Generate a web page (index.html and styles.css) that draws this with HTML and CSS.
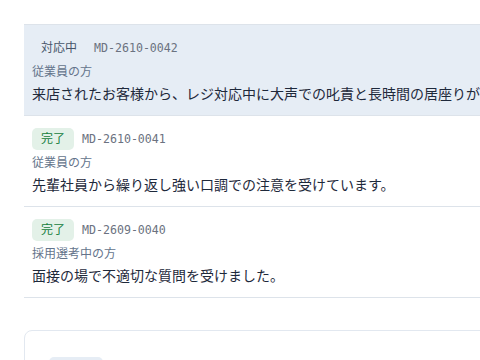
FILE: index.html
```html
<!DOCTYPE html>
<html lang="ja">
<head>
    <meta charset="UTF-8">
    <meta name="viewport" content="width=device-width, initial-scale=1.0">
    <title>相談一覧</title>
    <link rel="stylesheet" href="styles.css">
</head>
<body>
    <div class="page">
        <ul class="case-list">
            <li class="case-item active">
                <div class="case-head">
                    <span class="status status-open">対応中</span>
                    <span class="case-id">MD-2610-0042</span>
                </div>
                <div class="case-who">従業員の方</div>
                <div class="case-text">来店されたお客様から、レジ対応中に大声での叱責と長時間の居座りがありました。</div>
            </li>
            <li class="case-item">
                <div class="case-head">
                    <span class="status status-done">完了</span>
                    <span class="case-id">MD-2610-0041</span>
                </div>
                <div class="case-who">従業員の方</div>
                <div class="case-text">先輩社員から繰り返し強い口調での注意を受けています。</div>
            </li>
            <li class="case-item">
                <div class="case-head">
                    <span class="status status-done">完了</span>
                    <span class="case-id">MD-2609-0040</span>
                </div>
                <div class="case-who">採用選考中の方</div>
                <div class="case-text">面接の場で不適切な質問を受けました。</div>
            </li>
        </ul>

        <div class="detail-card">
            <span class="status status-open">対応中</span>
        </div>
    </div>
</body>
</html>
```

FILE: styles.css
```css
* {
    margin: 0;
    padding: 0;
    box-sizing: border-box;
}

body {
    background: #fff;
    color: #1e293b;
    font-family: "Noto Sans", "Noto Sans CJK JP", sans-serif;
    overflow: hidden;
}

.page {
    width: 640px;
    padding: 24px 0 0 24px;
}

.case-list {
    list-style: none;
    border-top: 1px solid #dde3ea;
}

.case-item {
    padding: 12px 8px 10px;
    border-bottom: 1px solid #dde3ea;
}

.case-item.active {
    background: #e6edf5;
}

.case-head {
    display: flex;
    align-items: center;
    gap: 8px;
}

.status {
    display: inline-block;
    font-size: 12px;
    line-height: 18px;
    padding: 2px 9px;
    border-radius: 5px;
}

.status-open {
    background: #e6edf5;
    color: #475569;
}

.status-done {
    background: #e3f1e8;
    color: #15803d;
}

.case-id {
    font-family: "DejaVu Sans Mono", monospace;
    font-size: 11.6px;
    color: #6b7280;
}

.case-who {
    margin-top: 4px;
    font-size: 12px;
    line-height: 18px;
    color: #64748b;
}

.case-text {
    margin-top: 2px;
    font-size: 14px;
    line-height: 22px;
    white-space: nowrap;
    overflow: hidden;
}

.detail-card {
    margin-top: 32px;
    border: 1px solid #e2e8f0;
    border-radius: 8px;
    padding: 24px;
    min-height: 120px;
}
```
